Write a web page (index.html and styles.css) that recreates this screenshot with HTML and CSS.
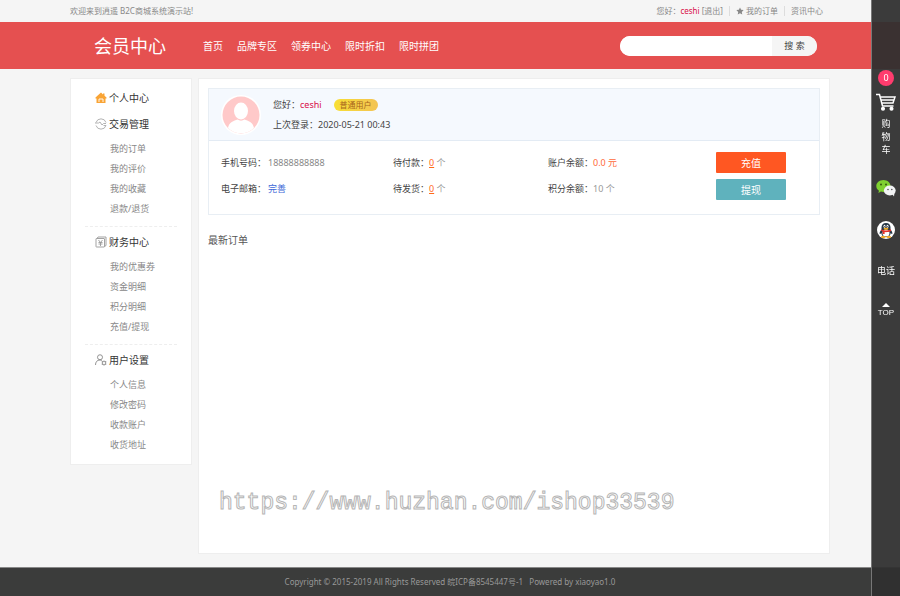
FILE: index.html
```html
<!DOCTYPE html>
<html lang="zh-CN">
<head>
<meta charset="utf-8">
<title>会员中心</title>
<link rel="stylesheet" href="styles.css">
</head>
<body>
<div class="topbar">
  <div class="wrap topbar-row">
    <span>欢迎来到逍遥 B2C商城系统演示站!</span>
    <div class="top-links">
      <span class="top-item"><span>您好：<a class="name" href="#">ceshi</a> <a href="#">[退出]</a></span></span>
      <a class="top-item" href="#"><svg class="star" viewBox="0 0 20 20"><path d="M10 1l2.800 6 6.400.8-4.700 4.500 1.200 6.500L10 15.600l-5.700 3.200 1.200-6.500L.8 7.800 7.200 7z" fill="#888"/></svg>我的订单</a>
      <a class="top-item" href="#">资讯中心</a>
    </div>
  </div>
</div>
<header class="header">
  <div class="wrap header-row">
    <h1 class="logo">会员中心</h1>
    <nav class="nav">
      <a href="#">首页</a><a href="#">品牌专区</a><a href="#">领券中心</a><a href="#">限时折扣</a><a href="#">限时拼团</a>
    </nav>
    <form class="search">
      <input type="text" aria-label="搜索">
      <button type="button">搜 索</button>
    </form>
  </div>
</header>
<main class="wrap main">
  <aside class="menu">
    <h2><svg viewBox="0 0 24 24"><path d="M12 1L1 11v2h2v9h18v-9h2v-2l-4-3.500V3h-3v2z" fill="#f9a435"/><path d="M8 20v-6h8v6" fill="none" stroke="#fff" stroke-width="1.800"/></svg>个人中心</h2>
    <section>
      <h2><svg viewBox="0 0 24 24" fill="none" stroke="#aaa" stroke-width="1.800"><path d="M2 9a10.500 10.500 0 0 1 20 0M22 15a10.500 10.500 0 0 1-20 0M0 10h7l3-2 4 6 3-3h5M17 15h5"/></svg>交易管理</h2>
      <ul><li><a href="#">我的订单</a></li><li><a href="#">我的评价</a></li><li><a href="#">我的收藏</a></li><li><a href="#">退款/退货</a></li></ul>
    </section>
    <section>
      <h2><svg viewBox="0 0 24 24" fill="none" stroke="#999" stroke-width="1.800"><rect x="2" y="5" width="17" height="17" rx="1"/><path d="M4 5l2-3h16v17l-3 2M7 8l4 5 4-5M7 13h8M7 16h8M11 13v7"/></svg>财务中心</h2>
      <ul><li><a href="#">我的优惠券</a></li><li><a href="#">资金明细</a></li><li><a href="#">积分明细</a></li><li><a href="#">充值/提现</a></li></ul>
    </section>
    <section>
      <h2><svg viewBox="0 0 24 24" fill="none" stroke="#888" stroke-width="1.800"><circle cx="10" cy="6.500" r="5"/><path d="M1 22c0-6 3-10 9-10 2 0 3 .5 4 1M18 13.500l1.300 2 2.700-.3-1 2.800 1 2.700-2.700-.2-1.300 2.200-1.300-2.200-2.700.2 1-2.700-1-2.800 2.700.3z"/></svg>用户设置</h2>
      <ul><li><a href="#">个人信息</a></li><li><a href="#">修改密码</a></li><li><a href="#">收款账户</a></li><li><a href="#">收货地址</a></li></ul>
    </section>
  </aside>
  <div class="content">
    <div class="profile">
      <div class="profile-head">
        <svg class="avatar" viewBox="0 0 40 40"><circle cx="20" cy="20" r="20" fill="#fff"/><circle cx="20" cy="20" r="18.500" fill="#ffc9c9"/><ellipse cx="20" cy="16" rx="7" ry="8.500" fill="#fff"/><path d="M7 33c1-6 6-7 9.500-8.500 2 1.500 5 1.500 7 0C27 26 32 27 33 33a18.500 18.500 0 0 1-26 0z" fill="#fff"/></svg>
        <div class="who">
          <div>您好：<a class="name" href="#">ceshi</a><span class="level">普通用户</span></div>
          <div>上次登录：2020-05-21 00:43</div>
        </div>
      </div>
      <div class="profile-body">
        <div><p>手机号码：<span class="val">18888888888</span></p><p>电子邮箱：<a class="val fill" href="#">完善</a></p></div>
        <div><p>待付款：<a class="count" href="#">0</a> <span class="unit">个</span></p><p>待发货：<a class="count" href="#">0</a> <span class="unit">个</span></p></div>
        <div><p>账户余额：<span class="money">0.0 元</span></p><p>积分余额：<span class="gray">10 个</span></p></div>
        <div class="actions"><button type="button" class="pay">充值</button><button type="button" class="cash">提现</button></div>
      </div>
    </div>
    <h3>最新订单</h3>
    <div class="watermark">https://www.huzhan.com/ishop33539</div>
  </div>
</main>
<footer class="footer"><div class="wrap">Copyright © 2015-2019 All Rights Reserved 皖ICP备8545447号-1 &nbsp; Powered by xiaoyao1.0</div></footer>
<aside class="dock">
  <a class="cart" href="#">
    <span class="badge">0</span>
    <svg viewBox="0 0 20 18" fill="none" stroke="#fff" stroke-width="1.500"><path d="M0 1.500h3.500L6.500 13h11M4.500 4H19l-2 6H6M5.500 7h12"/><circle cx="7" cy="15.800" r="1.300" fill="#fff"/><circle cx="15.500" cy="15.800" r="1.300" fill="#fff"/></svg>
    <span class="cart-text">购物车</span>
  </a>
  <a class="wechat" href="#" aria-label="微信"><svg viewBox="0 0 20 18"><path d="M7.500 1C3.300 1 .3 3.800.3 7c0 2 1 3.600 2.700 4.700L2.300 14l2.700-1.400c4.500 1.200 9.500-1 9.500-5.600 0-3.200-3-6-7-6z" fill="#7fd130"/><circle cx="5" cy="5.500" r="1" fill="#35580f"/><circle cx="10" cy="5.500" r="1" fill="#35580f"/><ellipse cx="13.800" cy="11.500" rx="5.900" ry="5.100" fill="#f1f3f4"/><path d="M16 15l2 2.500.5-4z" fill="#f1f3f4"/><circle cx="12" cy="10.500" r=".8" fill="#555"/><circle cx="15.800" cy="10.500" r=".8" fill="#555"/></svg></a>
  <a class="qq" href="#" aria-label="QQ"><svg viewBox="0 0 36 36"><circle cx="18" cy="18" r="18" fill="#fff"/><path d="M18 4c-6 0-9 4-9 9v4c-3 3-4.500 7-3.500 9 1 .5 2-1 3-2 1 6 5 8 9.500 8s8.500-2 9.500-8c1 1 2 2.500 3 2 1-2-.5-6-3.500-9v-4c0-5-3-9-9-9z" fill="#273746"/><ellipse cx="18" cy="24" rx="7" ry="7" fill="#fff"/><ellipse cx="15" cy="10.500" rx="2" ry="3" fill="#fff"/><ellipse cx="21" cy="10.500" rx="2" ry="3" fill="#fff"/><circle cx="15.500" cy="11" r="1" fill="#111"/><circle cx="20.500" cy="11" r="1" fill="#111"/><ellipse cx="18" cy="15.500" rx="5" ry="1.800" fill="#f6a91b"/><path d="M8.500 16.500c6 3.500 13 3.500 19 0l.8 3.500c-4 2-9 2.500-13 2.200V26h-4v-5l-3-1.500z" fill="#e6332a"/><ellipse cx="12.500" cy="32" rx="5" ry="2.200" fill="#f6a91b"/><ellipse cx="23.500" cy="32" rx="5" ry="2.200" fill="#f6a91b"/></svg></a>
  <a class="tel" href="#">电话</a>
  <a class="totop" href="#"><svg viewBox="0 0 8 4"><path d="M4 0l4 4H0z" fill="#fff"/></svg>TOP</a>
</aside>
</body>
</html>
```
FILE: styles.css
```css
* { box-sizing: border-box; }
body {
  margin: 0;
  min-height: 100vh;
  display: flex;
  flex-direction: column;
  background: #f5f5f5;
  color: #444;
  font: 9px/20px "Noto Sans", "Noto Sans CJK SC", sans-serif;
}
h1, h2, h3, p, ul { margin: 0; padding: 0; font-weight: 400; }
ul { list-style: none; }
a { color: inherit; text-decoration: none; }
svg { display: block; flex: none; }
button, input { font: inherit; border: 0; padding: 0; }
.wrap { width: 100%; max-width: 760px; margin: 0 auto; }

.topbar { font-size: 8px; line-height: 22px; color: #888; }
.topbar-row, .top-links, .top-item { display: flex; align-items: center; }
.topbar-row { justify-content: space-between; padding-right: 7px; }
.top-item { line-height: 10px; }
.top-item + .top-item { margin-left: 6px; padding-left: 6px; border-left: 1px solid #ddd; }
.star { width: 8px; height: 8px; margin-right: 2px; }
.name { color: #d9104a; }

.header { background: #e55050; color: #fff; }
.header-row { display: flex; align-items: center; height: 47px; padding: 0 13px 0 24px; }
.logo { font-size: 18px; }
.nav { display: flex; gap: 14px; margin-left: 37px; font-size: 10px; }
.search { display: flex; width: 197px; height: 20px; margin-left: auto; border-radius: 10px; overflow: hidden; background: #fff; }
.search input { flex: 1; min-width: 0; padding: 0 10px; outline: 0; }
.search button { width: 45px; background: #f5f5f5; color: #444; }

.main { flex: 1; display: flex; align-items: flex-start; gap: 6px; padding: 9px 0 13px; }
.menu { width: 122px; padding: 6px 14px 9px; background: #fff; border: 1px solid #eee; }
.menu h2 { display: flex; align-items: center; gap: 2px; padding-left: 10px; font-size: 10px; line-height: 26px; color: #333; }
.menu h2 svg { width: 12px; height: 12px; }
.menu section + section { margin-top: 7px; padding-top: 2px; border-top: 1px dashed #eee; }
.menu ul { padding: 2px 0 0 25px; color: #888; }

.content { position: relative; align-self: stretch; flex: 1; padding: 9px; background: #fff; border: 1px solid #eee; }
.profile { border: 1px solid #e8eef4; }
.profile-head { display: flex; align-items: center; gap: 12px; height: 52px; padding: 0 12px; background: #f5f9fe; border-bottom: 1px solid #e3ebf4; }
.avatar { width: 40px; height: 40px; }
.level { display: inline-block; margin-left: 12px; padding: 0 6px; border-radius: 6px; background: linear-gradient(90deg, #f8df35, #f3c354); color: #a8651d; font-size: 8px; line-height: 12px; }
.profile-body { display: grid; grid-template-columns: 172fr 155fr 168fr 91fr; padding: 9px 12px 12px; line-height: 26px; }
.val { margin-left: 2px; color: #888; }
.fill { color: #3e68d8; }
.count { color: #ff6a1a; text-decoration: underline; }
.unit, .gray { color: #999; }
.money { color: #ff6a3a; }
.actions { display: flex; flex-direction: column; gap: 6px; padding-top: 2px; }
.actions button { width: 70px; height: 21px; border-radius: 1px; color: #fff; font-size: 10px; line-height: 20px; }
.pay { background: #ff5722; }
.cash { background: #5fb2bd; }
.content h3 { margin-top: 15px; font-size: 10px; color: #555; }
.watermark { position: absolute; left: 20px; bottom: 34px; font: 23px/32px "Liberation Mono", monospace; color: #fff; -webkit-text-stroke: 1px #b5b5b5; }

.footer { background: #3b3c3b; border-top: 1px solid #888; color: #999; font-size: 8px; line-height: 28px; text-align: center; }

.dock { position: fixed; top: 0; right: 0; bottom: 0; width: 29px; padding-top: 70px; display: flex; flex-direction: column; align-items: center; background: rgba(48, 48, 48, 0.945); border-left: 1px solid #777; color: #fff; }
.dock a { display: flex; flex-direction: column; align-items: center; }
.badge { width: 16px; height: 16px; border-radius: 8px; background: #ff3c6e; text-align: center; line-height: 16px; }
.cart svg { width: 20px; height: 18px; margin: 7px 0 6px; }
.cart-text { width: 9px; line-height: 13px; }
.wechat { margin-top: 23px; }
.wechat svg { width: 20px; height: 18px; }
.qq { margin-top: 24px; }
.qq svg { width: 18px; height: 18px; }
.tel { margin-top: 22px; }
.totop { margin-top: 22px; font: 8px/9px "Liberation Sans", sans-serif; }
.totop svg { width: 8px; height: 4px; margin-bottom: 1px; }
```
